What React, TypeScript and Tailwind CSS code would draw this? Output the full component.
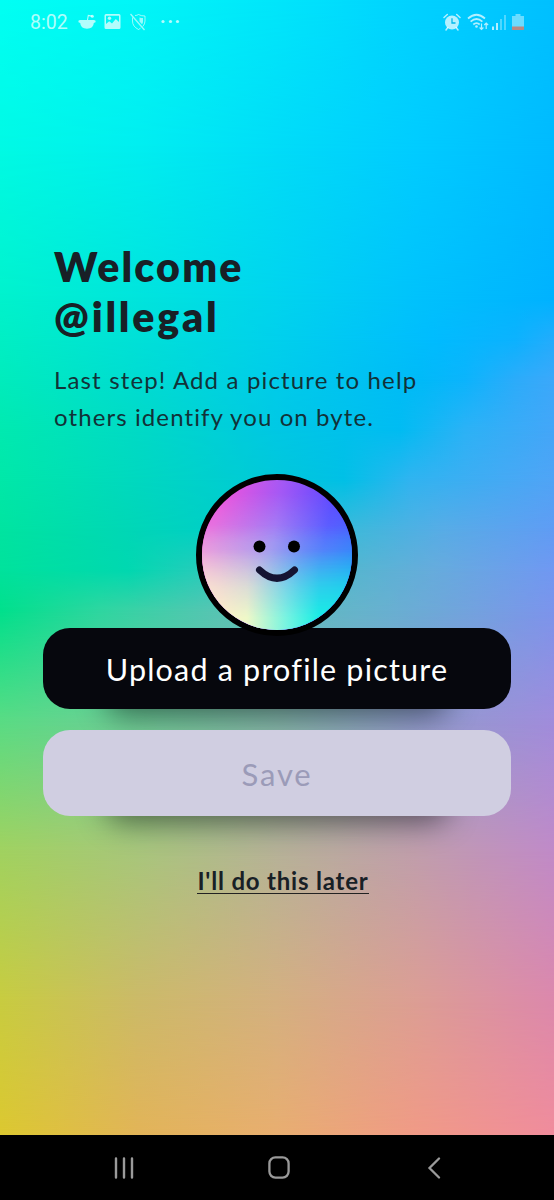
import type { ReactNode } from 'react';

// Colour rows of the backdrop. Every row fades in over the one before it.
const rows = [
    'bg-[linear-gradient(to_right,#00fff4,#00f6f8,#00e6fb,#00d2ff,#00c0ff)]',
    'bg-[linear-gradient(to_right,#00fae4,#00eef0,#00dcf8,#00ccff,#00baff)] [mask-image:linear-gradient(to_bottom,transparent_0px,black_150px)]',
    'bg-[linear-gradient(to_right,#00f2cc,#00e4dc,#00d4ee,#00c2fc,#00b2ff)] [mask-image:linear-gradient(to_bottom,transparent_150px,black_300px)]',
    'bg-[linear-gradient(to_right,#00efc4,#00e0d8_25%,#00d0ec_50%,#00bcfe_78%,#0cb2fe_93%,#24acfc)] [mask-image:linear-gradient(to_bottom,transparent_300px,black_340px)]',
    'bg-[linear-gradient(to_right,#00ecbc,#00dcd2_25%,#00ccea_50%,#00baf8_76%,#0cb4fc_84%,#2cacfa_93%,#3ca8fa)] [mask-image:linear-gradient(to_bottom,transparent_340px,black_380px)]',
    'bg-[linear-gradient(to_right,#00eab0,#00dac6_25%,#00c8e4_50%,#00bcf2_72%,#2cb2f6_84%,#44a6f8)] [mask-image:linear-gradient(to_bottom,transparent_380px,black_430px)]',
    'bg-[linear-gradient(to_right,#00e8a8,#00d8c0_25%,#00c8da_50%,#00c0e6_62%,#30b4f0_74%,#50a4f6)] [mask-image:linear-gradient(to_bottom,transparent_430px,black_480px)]',
    'bg-[linear-gradient(to_right,#00e4a0,#00d6b8_25%,#00cccc_44%,#38bcd8_60%,#58ace6_80%,#609cf4)] [mask-image:linear-gradient(to_bottom,transparent_480px,black_530px)]',
    'bg-[linear-gradient(to_right,#00e29c,#00d8b0_23%,#2ccabc_38%,#4cbcc8_55%,#66acdc_78%,#7098f2)] [mask-image:linear-gradient(to_bottom,transparent_530px,black_570px)]',
    'bg-[linear-gradient(to_right,#00e08c,#2ed6a0_18%,#58c4b4_40%,#68b0d0_70%,#7c94ec)] [mask-image:linear-gradient(to_bottom,transparent_570px,black_610px)]',
    'bg-[linear-gradient(to_right,#58dc84,#6ecc98,#84b8ac,#909ccc,#a08cdc)] [mask-image:linear-gradient(to_bottom,transparent_610px,black_720px)]',
    'bg-[linear-gradient(to_right,#a0d260,#a8c67c,#b6b298,#c09eac,#c08ac8)] [mask-image:linear-gradient(to_bottom,transparent_720px,black_850px)]',
    'bg-[linear-gradient(to_right,#c8cc40,#ccba68,#d4b080,#dc9e94,#dc88ac)] [mask-image:linear-gradient(to_bottom,transparent_850px,black_1000px)]',
    'bg-[linear-gradient(to_right,#dcc830,#e2b458,#e8ae70,#f09a86,#f08c9c)] [mask-image:linear-gradient(to_bottom,transparent_1000px,black_1135px)]',
];

function StatusBar() {
    return (
        <div className="flex h-[43px] items-center justify-between pl-[30px] pr-[30px] text-white/70">
            <div className="flex items-center">
                <span className="w-[38px] whitespace-nowrap pt-0.5 font-['Roboto'] text-[19.5px] leading-none">8:02</span>
                <svg className="ml-[10px]" width="18" height="18" viewBox="0 0 18 18" fill="currentColor">
                    <path d="M.5 9.300Q0 7 2.200 7H15.800Q18 7 17.500 9.300L15.800 10Q15.500 15.500 9 15.800Q2.500 15.500 2.200 10z" />
                    <path d="M9.500 7l.8-4.500 3.700.6" fill="none" stroke="currentColor" strokeWidth="1.100" />
                    <circle cx="14.300" cy="3.200" r="1.500" />
                </svg>
                <svg className="ml-[8px]" width="17" height="18" viewBox="0 0 17 18" fill="currentColor">
                    <path
                        fillRule="evenodd"
                        d="M2 1h13a1.500 1.500 0 0 1 1.500 1.500v12a1.500 1.500 0 0 1-1.500 1.500H2a1.500 1.500 0 0 1-1.500-1.500V2.500A1.500 1.500 0 0 1 2 1zM2 2.700v8.300l3.200-2.800 2.800 2.300 3.800-4.500 3.200 3V2.700z"
                    />
                    <circle cx="5.500" cy="5.300" r="1.700" />
                </svg>
                <svg className="ml-[9px] text-white/60" width="17" height="18" viewBox="0 0 17 18" fill="none" stroke="currentColor">
                    <path d="M5 2.500Q7 2.500 8.500 1.500Q11 3 15 3V8q0 3-2.200 5.500M2.500 4.500V8q0 5.500 6 8.500l2-1.300" />
                    <path d="M9.500 4.500q1.500.5 3.500.5v3.500q0 1.500-1 2.800L9.500 8.500z" fill="currentColor" stroke="none" />
                    <path d="M.5 1l14 16" strokeWidth="1.300" />
                </svg>
                <svg className="ml-[13px]" width="20" height="18" viewBox="0 0 20 18" fill="currentColor">
                    <circle cx="3" cy="8.500" r="1.600" />
                    <circle cx="10.500" cy="8.500" r="1.600" />
                    <circle cx="17.500" cy="8.500" r="1.600" />
                </svg>
            </div>
            <div className="flex items-center">
                <svg width="18" height="18" viewBox="0 0 18 18">
                    <circle cx="9" cy="9.500" r="7" fill="currentColor" />
                    <g fill="none" stroke="currentColor" strokeWidth="1.500" strokeLinecap="round">
                        <path d="M1 4.500L4.300 1.500M17 4.500L13.700 1.500M4.800 14.500L3 17M13.200 14.500L15 17" />
                    </g>
                    <path d="M9 5.300V10h3.500" fill="none" stroke="#00b8ea" strokeWidth="1.300" />
                </svg>
                <svg className="ml-[6px]" width="23" height="18" viewBox="0 0 23 18" fill="none" stroke="currentColor" strokeWidth="1.700">
                    <path d="M1 5.500Q9.500-2 18 5.500M3.600 8.600Q9.500 3.400 15.400 8.600M6.300 11.500Q9.500 8.600 12.700 11.500" />
                    <circle cx="9.500" cy="13.500" r="1.300" fill="currentColor" stroke="none" />
                    <path d="M14.500 10.500v6M12.600 14.500l1.900 2 1.900-2M19.200 16v-6M17.300 12l1.900-2 1.900 2" strokeWidth="1.200" />
                </svg>
                <svg className="ml-[1px]" width="16" height="18" viewBox="0 0 16 18" fill="currentColor">
                    <rect x="1" y="13.500" width="2" height="3.500" />
                    <rect x="5" y="10" width="2" height="7" />
                    <rect x="9" y="6" width="2" height="11" opacity=".45" />
                    <rect x="13" y="2" width="2" height="15" opacity=".45" />
                </svg>
                <svg className="ml-[5px]" width="12" height="18" viewBox="0 0 12 18">
                    <path d="M3.500 1h5v2H12v14H0V3h3.500z" fill="currentColor" opacity=".6" />
                    <rect y="13.500" width="12" height="3.500" fill="#b98a84" />
                </svg>
            </div>
        </div>
    );
}

const Avatar = () => (
    <div className="relative z-10 h-[162px] w-[162px] overflow-hidden rounded-full border-[6px] border-black bg-[linear-gradient(100deg,#f054dc_12%,#a458f5_46%,#5f48ff_76%,#4a48ff)]">
        <div className="absolute inset-0 bg-[linear-gradient(100deg,#f07cdc,#a58cf4_46%,#5a68ff_76%,#3c70fc)] [mask-image:linear-gradient(to_bottom,transparent_8%,black_42%)]" />
        <div className="absolute inset-0 bg-[linear-gradient(95deg,#fcccd8,#bcb8e8_38%,#60a8f4_66%,#20a8f8)] [mask-image:linear-gradient(to_bottom,transparent_30%,black_72%)]" />
        <div className="absolute inset-0 bg-[linear-gradient(to_right,#fff0c8_12%,#eef8c8_30%,#78f4e0_56%,#18eee4_78%)] [mask-image:linear-gradient(to_bottom,transparent_46%,black_92%)]" />
        <svg className="absolute inset-0" width="150" height="150" viewBox="0 0 150 150">
            <circle cx="57.500" cy="66.500" r="6" />
            <circle cx="92" cy="66.500" r="6" />
            <path d="M57.500 90Q75 106.500 92.500 90" fill="none" stroke="#151433" strokeWidth="7" strokeLinecap="round" />
        </svg>
    </div>
);

interface BigButtonProps {
    className: string;
    children: ReactNode;
}

const BigButton = ({ className, children }: BigButtonProps) => (
    <div className="relative w-full">
        <div className="absolute -bottom-1.5 left-[62px] right-[62px] h-10 rounded-[20px] bg-black/50 blur-[15px]" />
        <button className={`relative flex w-full items-center justify-center rounded-[27px] pt-0.5 ${className}`}>
            {children}
        </button>
    </div>
);

function NavBar() {
    return (
        <div className="relative flex h-[65px] items-center bg-black text-[#9a9a9a]">
            <svg className="ml-[113px]" width="22" height="22" viewBox="0 0 22 22" stroke="currentColor" strokeWidth="2.400" strokeLinecap="round">
                <path d="M3 1.500v19M11 1.500v19M19 1.500v19" />
            </svg>
            <svg className="ml-[133px]" width="22" height="23" viewBox="0 0 22 23" fill="none" stroke="currentColor" strokeWidth="2.300">
                <rect x="1.400" y="1.400" width="19.200" height="20.200" rx="6" />
            </svg>
            <svg className="ml-[137px]" width="14" height="22" viewBox="0 0 14 22" fill="none" stroke="currentColor" strokeWidth="2.300" strokeLinecap="round">
                <path d="M12 1.500L2.500 11L12 20.500" />
            </svg>
        </div>
    );
}

export default function App() {
    return (
        <div className="relative flex h-[1200px] w-[554px] flex-col overflow-hidden font-['Lato',sans-serif] text-[#182026]">
            {rows.map((row) => (
                <div key={row} className={`absolute inset-x-0 top-0 h-[1135px] ${row}`} />
            ))}
            <div className="relative flex h-[1135px] flex-col">
                <StatusBar />
                <div className="mt-[199px] pl-[54px]">
                    <h1 className="text-[41px] font-extrabold leading-[50px]">
                        <span className="block tracking-[2.2px]">Welcome</span>
                        <span className="block tracking-[2.8px]">@illegal</span>
                    </h1>
                    <p className="mt-5 text-[24px] leading-[36.5px] text-[#123238]">
                        <span className="block tracking-[1.15px]">Last step! Add a picture to help</span>
                        <span className="block tracking-[1.1px]">others identify you on byte.</span>
                    </p>
                </div>
                <div className="mt-[39px] flex flex-col items-center px-[43px]">
                    <Avatar />
                    <div className="-mt-2 w-full">
                        <BigButton className="h-[81px] bg-[#06070d] text-[30.5px] text-white tracking-[1.2px]">Upload a profile picture</BigButton>
                    </div>
                    <div className="mt-[21px] w-full">
                        <BigButton className="h-[86px] bg-[#d0cee1] text-[31px] text-[#9b9bb8] tracking-[1.8px]">Save</BigButton>
                    </div>
                    <a className="ml-3 mt-[52px] border-b-[1.5px] border-[#222] text-[24px] font-bold leading-[25px] tracking-[0.8px]">
                        I'll do this later
                    </a>
                </div>
            </div>
            <NavBar />
        </div>
    );
}
